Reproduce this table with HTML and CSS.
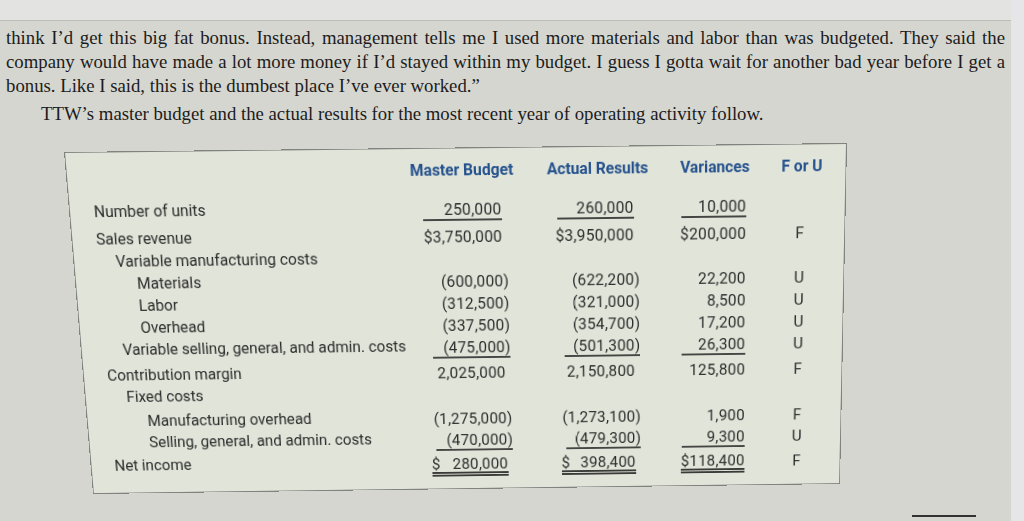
FILE: index.html
```html
<!DOCTYPE html>
<html lang="en">
<head>
<meta charset="utf-8">
<title>TTW master budget</title>
<link rel="stylesheet" href="styles.css">
</head>
<body>
<div class="page">
  <div class="main">
    <div class="topstrip"></div>
    <div class="para">
      <div class="ln j">think I’d get this big fat bonus. Instead, management tells me I used more materials and labor than was budgeted. They said the</div>
      <div class="ln j">company would have made a lot more money if I’d stayed within my budget. I guess I gotta wait for another bad year before I get a</div>
      <div class="ln">bonus. Like I said, this is the dumbest place I’ve ever worked.”</div>
      <div class="ln ind">TTW’s master budget and the actual results for the most recent year of operating activity follow.</div>
    </div>

    <div class="box">
      <div class="row head">
        <div class="lab"></div>
        <div class="h">Master Budget</div>
        <div class="h">Actual Results</div>
        <div class="h">Variances</div>
        <div class="h hfu">F or U</div>
      </div>

      <div class="row r-units">
        <div class="lab l0">Number of units</div>
        <div class="c c1 pos"><span class="v u">250,000</span></div>
        <div class="c c2 pos"><span class="v u">260,000</span></div>
        <div class="c c3"><span class="v u">10,000</span></div>
        <div class="fu"></div>
      </div>
      <div class="row r-gap5">
        <div class="lab l0">Sales revenue</div>
        <div class="c c1 pos"><span class="v">$3,750,000</span></div>
        <div class="c c2 pos"><span class="v">$3,950,000</span></div>
        <div class="c c3"><span class="v">$200,000</span></div>
        <div class="fu">F</div>
      </div>
      <div class="row">
        <div class="lab l1">Variable manufacturing costs</div>
        <div class="c c1"></div>
        <div class="c c2"></div>
        <div class="c c3"></div>
        <div class="fu"></div>
      </div>
      <div class="row">
        <div class="lab l2">Materials</div>
        <div class="c c1"><span class="v">(600,000)</span></div>
        <div class="c c2"><span class="v">(622,200)</span></div>
        <div class="c c3"><span class="v">22,200</span></div>
        <div class="fu">U</div>
      </div>
      <div class="row">
        <div class="lab l2">Labor</div>
        <div class="c c1"><span class="v">(312,500)</span></div>
        <div class="c c2"><span class="v">(321,000)</span></div>
        <div class="c c3"><span class="v">8,500</span></div>
        <div class="fu">U</div>
      </div>
      <div class="row">
        <div class="lab l2">Overhead</div>
        <div class="c c1"><span class="v">(337,500)</span></div>
        <div class="c c2"><span class="v">(354,700)</span></div>
        <div class="c c3"><span class="v">17,200</span></div>
        <div class="fu">U</div>
      </div>
      <div class="row">
        <div class="lab l1">Variable selling, general, and admin. costs</div>
        <div class="c c1"><span class="v u">(475,000)</span></div>
        <div class="c c2"><span class="v u">(501,300)</span></div>
        <div class="c c3"><span class="v u">26,300</span></div>
        <div class="fu">U</div>
      </div>
      <div class="row r-gap4">
        <div class="lab l0">Contribution margin</div>
        <div class="c c1 pos"><span class="v">2,025,000</span></div>
        <div class="c c2 pos"><span class="v">2,150,800</span></div>
        <div class="c c3"><span class="v">125,800</span></div>
        <div class="fu">F</div>
      </div>
      <div class="row">
        <div class="lab l1">Fixed costs</div>
        <div class="c c1"></div>
        <div class="c c2"></div>
        <div class="c c3"></div>
        <div class="fu"></div>
      </div>
      <div class="row r-gap2">
        <div class="lab l2">Manufacturing overhead</div>
        <div class="c c1"><span class="v">(1,275,000)</span></div>
        <div class="c c2"><span class="v">(1,273,100)</span></div>
        <div class="c c3"><span class="v">1,900</span></div>
        <div class="fu">F</div>
      </div>
      <div class="row">
        <div class="lab l2">Selling, general, and admin. costs</div>
        <div class="c c1"><span class="v u">(470,000)</span></div>
        <div class="c c2"><span class="v u">(479,300)</span></div>
        <div class="c c3"><span class="v u">9,300</span></div>
        <div class="fu">U</div>
      </div>
      <div class="row r-last">
        <div class="lab l0">Net income</div>
        <div class="c c1 pos"><span class="v d split"><span>$</span><span>280,000</span></span></div>
        <div class="c c2 pos"><span class="v d split"><span>$</span><span>398,400</span></span></div>
        <div class="c c3"><span class="v d">$118,400</span></div>
        <div class="fu">F</div>
      </div>
    </div>

    <div class="foot"><div class="bar"></div></div>
  </div>
  <div class="edge"></div>
</div>
</body>
</html>
```

FILE: styles.css
```css
html, body {
  margin: 0;
  padding: 0;
}

body {
  background: #d6d6d0;
  overflow: hidden;
}

.page {
  display: grid;
  grid-template-columns: 1011px 13px;
  width: 1024px;
  height: 521px;
  overflow: hidden;
}

.main {
  display: flex;
  flex-direction: column;
  align-items: flex-start;
  min-width: 0;
}

.edge {
  background: #e6e6e9;
}

.topstrip {
  align-self: stretch;
  height: 20px;
  background: #e3e3e1;
  border-bottom: 1px solid #bdbdb8;
}

/* ---------- narrative paragraph ---------- */
.para {
  margin-top: 5px;
  padding-left: 6px;
  width: 999px;
  font-family: "Liberation Serif", "Times New Roman", serif;
  font-size: 18.75px;
  line-height: 24px;
  color: #1c1c1c;
}

.ln {
  text-align: left;
}

.ln.j {
  text-align: justify;
  text-align-last: justify;
}

.ln.ind {
  margin-top: 4px;
  text-indent: 35px;
}

/* ---------- table box (photographed at an angle) ---------- */
.box {
  box-sizing: border-box;
  width: 786px;
  height: 358px;
  margin-top: 26px;
  margin-left: 64px;
  padding-top: 10.5px;
  background: #e1e4d9;
  border: 1px solid #80837e;
  font-family: Roboto, "Liberation Sans", sans-serif;
  font-size: 15.7px;
  color: #2c2c2c;
  transform-origin: 0 0;
  transform: matrix3d(1.000514, -0.0115, 0, 0.0000055305,
                      0.084913, 1.001385, 0, 0.000134732,
                      0, 0, 1, 0,
                      0, 0, 0, 1);
}

.row {
  display: grid;
  grid-template-columns: 310px 107px 101px 70px 43px;
  column-gap: 33px;
  height: 23px;
}

.row.head {
  margin-top: -1px;
}

.r-units { margin-top: 16px; }
.r-gap5 { margin-top: 5px; }
.r-gap4 { margin-top: 4.5px; }
.r-gap2 { margin-top: 2.5px; }
.r-last { margin-top: 4px; }

.h {
  display: flex;
  justify-content: center;
  font-weight: 700;
  line-height: 23px;
  color: #24518d;
  white-space: nowrap;
}

.h.hfu {
  margin-left: -3px;
}

.lab {
  line-height: 22px;
  white-space: nowrap;
}

.r-last .lab {
  margin-top: -2px;
}

.l0 { padding-left: 24px; }
.l1 { padding-left: 42px; }
.l2 { padding-left: 62px; }

.c {
  display: flex;
  justify-content: flex-end;
  align-items: flex-start;
  padding-top: 3px;
  letter-spacing: 0.3px;
  white-space: nowrap;
}

.c1, .c2 {
  padding-right: 8.6px;
}

.c3 {
  padding-right: 3px;
}

.pos::after {
  content: ")";
  visibility: hidden;
  line-height: 19px;
}

.v {
  display: block;
  line-height: 19px;
  border-bottom: 2px solid transparent;
  text-align: right;
}

.v.u {
  border-bottom-color: #454543;
}

.v.d {
  line-height: 17px;
  border-bottom: 5px double #3a3a38;
}

.c1 .u, .c1 .d { min-width: 80px; }
.c2 .u, .c2 .d { min-width: 78px; }
.c3 .u, .c3 .d { min-width: 66px; }

.split {
  display: flex;
  justify-content: space-between;
}

.fu {
  display: flex;
  justify-content: center;
  padding-top: 3px;
  line-height: 19px;
  padding-right: 6px;
}

/* ---------- bottom corner ---------- */
.foot {
  margin-top: 5px;
  padding-left: 912px;
}

.bar {
  width: 64px;
  height: 2px;
  background: #333333;
}
```
